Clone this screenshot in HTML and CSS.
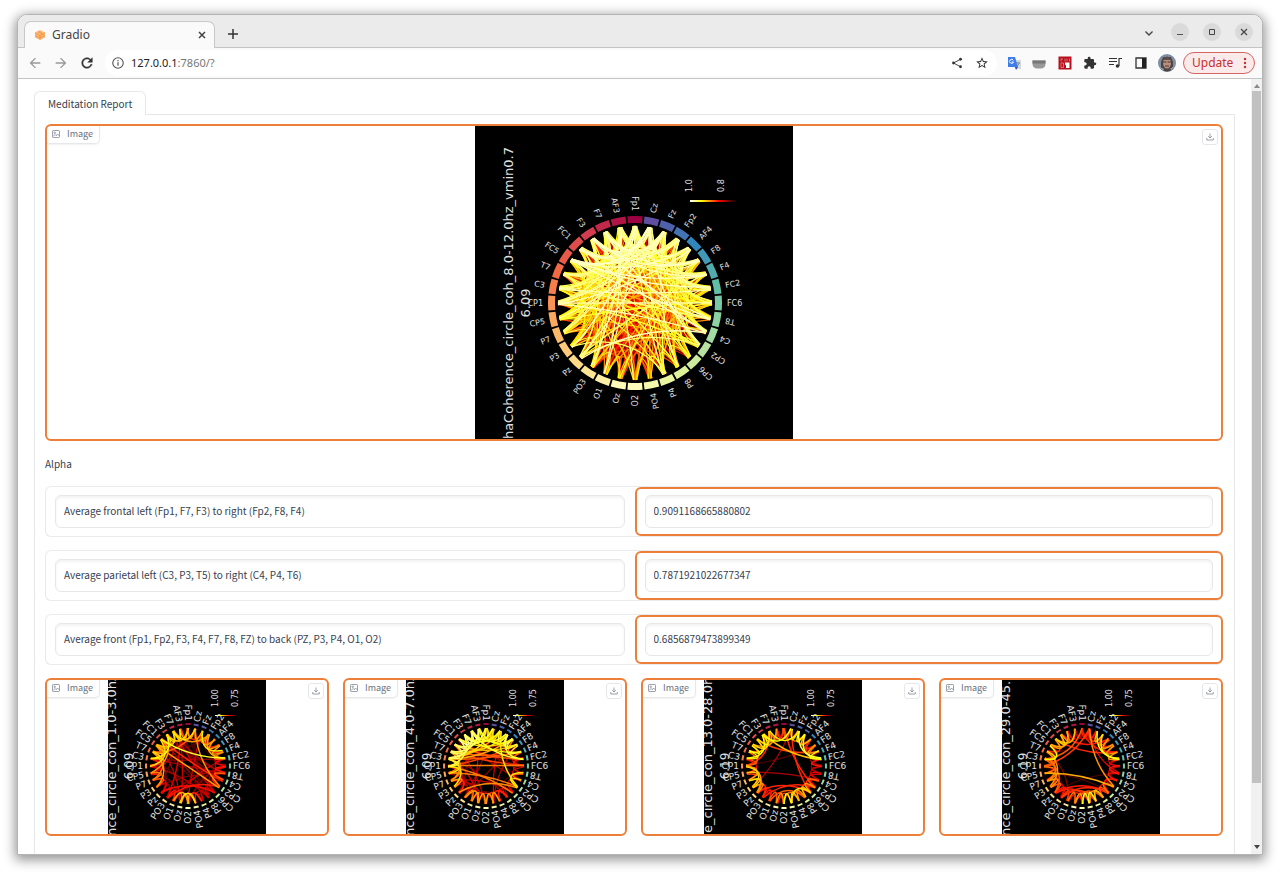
FILE: index.html
```html
<!DOCTYPE html>
<html lang="en">
<head>
<meta charset="utf-8">
<title>Gradio</title>
<link rel="stylesheet" href="styles.css">
</head>
<body>
<div class="window">
  <header class="tabstrip">
    <div class="browser-tab">
      <svg class="favicon" viewBox="0 0 24 24" aria-hidden="true"><path d="M12 2l10 5v10l-10 5-10-5V7z" fill="#fbb977"/><path d="M2 8l10 5 10-5M2 13l10 5 10-5M8 5l9 5M12 13v8" fill="none" stroke="#f08f3a" stroke-width="1.600"/></svg>
      <span class="browser-tab-title">Gradio</span>
      <button class="icon-btn tab-close" aria-label="Close tab"><svg viewBox="0 0 16 16"><path d="M5 5l6 6M11 5l-6 6" stroke="#444" stroke-width="1.500"/></svg></button>
    </div>
    <button class="icon-btn new-tab" aria-label="New tab"><svg viewBox="0 0 16 16"><path d="M8 3v10M3 8h10" stroke="#333" stroke-width="1.500"/></svg></button>
    <div class="window-controls">
      <button class="icon-btn tab-search" aria-label="Search tabs"><svg viewBox="0 0 16 16"><path d="M4.500 7.500L8 11l3.500-3.500" fill="none" stroke="#444" stroke-width="1.400"/></svg></button>
      <button class="icon-btn round" aria-label="Minimize"><svg viewBox="0 0 18 18"><path d="M6 11.500h6" stroke="#555" stroke-width="1"/></svg></button>
      <button class="icon-btn round" aria-label="Maximize"><svg viewBox="0 0 18 18"><path d="M6.500 6.500h5v5h-5z" fill="none" stroke="#444" stroke-width="1"/></svg></button>
      <button class="icon-btn round" aria-label="Close"><svg viewBox="0 0 18 18"><path d="M6 6l6 6M12 6l-6 6" stroke="#444" stroke-width="1.200"/></svg></button>
    </div>
  </header>

  <nav class="toolbar" aria-label="Browser">
    <div class="nav-buttons">
      <button class="icon-btn faded" aria-label="Back"><svg viewBox="0 0 24 24"><path d="M20 11H7.830l5.590-5.590L12 4l-8 8 8 8 1.410-1.410L7.830 13H20z"/></svg></button>
      <button class="icon-btn faded" aria-label="Forward"><svg viewBox="0 0 24 24"><path d="M4 13h12.170l-5.590 5.590L12 20l8-8-8-8-1.410 1.410L16.170 11H4z"/></svg></button>
      <button class="icon-btn" aria-label="Reload"><svg viewBox="0 0 24 24"><path d="M17.650 6.350C16.200 4.900 14.210 4 12 4c-4.420 0-7.990 3.580-7.990 8s3.570 8 7.990 8c3.730 0 6.840-2.550 7.730-6h-2.080c-.82 2.330-3.040 4-5.650 4-3.310 0-6-2.690-6-6s2.690-6 6-6c1.660 0 3.140.69 4.220 1.780L13 11h7V4z" stroke="#333" stroke-width=".6"/></svg></button>
    </div>
    <div class="omnibox">
      <svg class="info" viewBox="0 0 16 16" aria-hidden="true"><circle cx="8" cy="8" r="6" fill="none" stroke="#555" stroke-width="1.300"/><path d="M8 7.200v4M8 4.600v1.300" stroke="#555" stroke-width="1.400"/></svg>
      <span class="url"><span class="host">127.0.0.1</span>:7860/?</span>
      <button class="icon-btn share" aria-label="Share"><svg viewBox="0 0 24 24"><path d="M19 4.500L5 12l14 7.500" fill="none" stroke="#444" stroke-width="2"/><circle cx="19" cy="4.500" r="2.800"/><circle cx="5" cy="12" r="2.800"/><circle cx="19" cy="19.500" r="2.800"/></svg></button>
      <button class="icon-btn star" aria-label="Bookmark"><svg viewBox="0 0 24 24"><path d="M22 9.240l-7.190-.62L12 2 9.190 8.630 2 9.240l5.460 4.730L5.820 21 12 17.270 18.180 21l-1.630-7.030zM12 15.400l-3.760 2.270 1-4.280-3.320-2.880 4.380-.38L12 6.100l1.710 4.040 4.380.38-3.320 2.880 1 4.280z"/></svg></button>
    </div>
    <div class="extensions">
      <button class="icon-btn" aria-label="Translate"><svg viewBox="0 0 16 16"><path d="M7 5h8v9H9z" fill="#d5d8dc"/><path d="M10 8h4M12 7v1M10.500 12l3-4" stroke="#888" fill="none"/><path d="M2 2h7l3 10H2z" fill="#3f7de8"/><path d="M9 12h3l-2 3z" fill="#2856b8"/><path d="M7.300 5.300A2 2 0 1 0 7.500 7H5.700" fill="none" stroke="#fff"/></svg></button>
      <button class="icon-btn" aria-label="Pocket"><svg viewBox="0 0 16 16"><path d="M1.500 5.500h13v3q0 5-5 5h-3q-5 0-5-5z" fill="#999"/><path d="M1.500 5.500h13v3h-13z" fill="#777"/></svg></button>
      <button class="icon-btn" aria-label="Reader extension"><svg viewBox="0 0 16 16"><path d="M1.500 1.500h13v13h-13z" fill="#b8101c"/><path d="M4 3.500v3M4 4h2M8 3.500v3M10 3.500v3M12.500 3.500v3M4 8v4.500h2.500V8z" fill="none" stroke="#e08a8a" stroke-width=".8"/><path d="M8 7.500h4.500V13H9v-3H8z" fill="#fff"/></svg></button>
      <button class="icon-btn" aria-label="Extensions"><svg viewBox="-2 -2 28 28"><path d="M20.500 11H19V7c0-1.100-.9-2-2-2h-4V3.500a2.500 2.500 0 0 0-5 0V5H4c-1.100 0-2 .9-2 2v3.800h1.500a2.700 2.700 0 0 1 0 5.400H2V20c0 1.100.9 2 2 2h3.800v-1.500a2.700 2.700 0 0 1 5.400 0V22H17c1.100 0 2-.9 2-2v-4h1.500a2.500 2.500 0 0 0 0-5z"/></svg></button>
      <button class="icon-btn" aria-label="Media controls"><svg viewBox="0 0 16 16"><path d="M2 3.500h8M2 6.500h8M2 9.500h5M12 11V3.500h3" fill="none" stroke="#333" stroke-width="1.200"/><circle cx="10.500" cy="11" r="1.800"/></svg></button>
      <button class="icon-btn" aria-label="Side panel"><svg viewBox="0 0 16 16"><path d="M3 3h10v10H3z" fill="none" stroke="#333" stroke-width="1.300"/><path d="M9 3h4v10H9z" fill="#222"/></svg></button>
      <button class="icon-btn avatar" aria-label="Profile"><svg viewBox="0 0 18 18"><circle cx="9" cy="9" r="9" fill="#7f8da2"/><path d="M3 15V8l2-5h8l2 5v7q-6 5-12 0z" fill="#4c4542"/><ellipse cx="9" cy="9" rx="4" ry="5.500" fill="#b98f82"/><path d="M5 5q4-5 8 0v1H5z" fill="#5b4d48"/><path d="M5 8h3.500M9.500 8H13M7 12h4" stroke="#4a3836" stroke-width="1"/><path d="M2 13l4 2-1 2zM12 15l4-3-2 4z" fill="#9aa9b8"/></svg></button>
    </div>
    <button class="update">Update<svg viewBox="0 0 4 12" aria-hidden="true"><circle cx="2" cy="2" r="1.200"/><circle cx="2" cy="6" r="1.200"/><circle cx="2" cy="10" r="1.200"/></svg></button>
  </nav>

  <div class="viewport">
    <main class="app">
      <div class="tabs" role="tablist"><button class="tab" role="tab" aria-selected="true">Meditation Report</button></div>
      <section class="panel">
        <figure class="image-box" data-chart="alpha"></figure>
        <p class="heading">Alpha</p>
        <div class="rows">
          <div class="row">
            <div class="cell"><input aria-label="Frontal metric" value="Average frontal left (Fp1, F7, F3) to right (Fp2, F8, F4)"></div>
            <div class="cell active"><input aria-label="Frontal value" value="0.9091168665880802"></div>
          </div>
          <div class="row">
            <div class="cell"><input aria-label="Parietal metric" value="Average parietal left (C3, P3, T5) to right (C4, P4, T6)"></div>
            <div class="cell active"><input aria-label="Parietal value" value="0.7871921022677347"></div>
          </div>
          <div class="row">
            <div class="cell"><input aria-label="Front to back metric" value="Average front (Fp1, Fp2, F3, F4, F7, F8, FZ) to back (PZ, P3, P4, O1, O2)"></div>
            <div class="cell active"><input aria-label="Front to back value" value="0.6856879473899349"></div>
          </div>
        </div>
        <div class="gallery">
          <figure class="image-box" data-chart="delta"></figure>
          <figure class="image-box" data-chart="theta"></figure>
          <figure class="image-box" data-chart="beta"></figure>
          <figure class="image-box" data-chart="gamma"></figure>
        </div>
      </section>
    </main>
    <div class="scrollbar" aria-hidden="true">
      <svg viewBox="0 0 8 8"><path d="M1 6l3-4 3 4z" fill="#8a8a8a"/></svg>
      <div class="track"><div class="thumb"></div></div>
      <svg viewBox="0 0 8 8"><path d="M1 2l3 4 3-4z" fill="#444"/></svg>
    </div>
  </div>
</div>
<script src="charts.js"></script>
</body>
</html>
```
FILE: styles.css
```css
* { box-sizing: border-box; }

body {
  margin: 0;
  padding: 14px 17px 19px;
  height: 100vh;
  background: #fff;
  color: #374151;
  font: 10px/16px "Noto Sans CJK SC", "Noto Sans", sans-serif;
  overflow: hidden;
}

button, input { font: inherit; color: inherit; }

.window {
  height: 100%;
  display: flex;
  flex-direction: column;
  background: #fff;
  border: 1px solid #b5b5b5;
  border-radius: 10px 10px 0 0;
  overflow: hidden;
  box-shadow: 0 3px 12px 2px rgba(0, 0, 0, .42);
}

.icon-btn {
  display: grid;
  place-items: center;
  width: 16px;
  height: 16px;
  padding: 0;
  border: 0;
  background: none;
  fill: #333;
}
.icon-btn svg { display: block; width: 100%; height: 100%; }
.faded { fill: #999; }

/* Browser chrome */
.tabstrip {
  display: flex;
  align-items: flex-end;
  flex: none;
  height: 33px;
  padding-left: 6px;
  background: #ebebeb;
  border-bottom: 1px solid #c4c4c4;
}
.browser-tab {
  display: flex;
  align-items: center;
  width: 191px;
  height: 27px;
  margin-bottom: -1px;
  padding: 0 4px 0 9px;
  background: #fafafa;
  border: 1px solid #c8c8c8;
  border-bottom: 0;
  border-radius: 7px 7px 0 0;
}
.favicon { width: 12px; height: 12px; }
.browser-tab-title {
  flex: 1;
  margin-left: 6px;
  color: #444;
  font: 12px/16px "Noto Sans", sans-serif;
}
.new-tab { align-self: center; margin: 6px 0 0 10px; }
.window-controls {
  display: flex;
  align-items: center;
  align-self: center;
  gap: 14px;
  margin: 2px 9px 0 auto;
}
.round { width: 18px; height: 18px; border-radius: 50%; background: #dadada; }

.toolbar {
  display: flex;
  align-items: center;
  flex: none;
  height: 31px;
  padding: 0 7px 0 9px;
  background: #fafafa;
  border-bottom: 1px solid #c4c4c4;
}
.nav-buttons { display: flex; gap: 10px; }
.omnibox {
  display: flex;
  align-items: center;
  flex: 1;
  height: 26px;
  margin: 0 9px 0 10px;
  padding: 0 8px 0 6px;
  background: #fff;
  border-radius: 13px;
}
.info { width: 14px; height: 14px; }
.url {
  flex: 1;
  margin-left: 6px;
  color: #777;
  font: 11px/16px "Noto Sans", sans-serif;
}
.host { color: #222; }
.share { width: 12px; height: 12px; margin-right: 12px; }
.star { width: 14px; height: 14px; }
.extensions {
  display: flex;
  align-items: center;
  justify-content: space-between;
  width: 170px;
}
.avatar { width: 18px; height: 18px; }
.update {
  display: flex;
  align-items: center;
  justify-content: space-between;
  width: 72px;
  height: 22px;
  margin-left: 7px;
  padding: 0 7px 0 8px;
  border: 1px solid #d56464;
  border-radius: 11px;
  background: #fbeaea;
  color: #c5302f;
  font: 12px/16px "Noto Sans", sans-serif;
}
.update svg { width: 4px; height: 12px; fill: #c5302f; }

/* Page */
.viewport { display: flex; flex: 1; min-height: 0; }
.app { flex: 1; min-width: 0; padding: 12px 16px 0; overflow: hidden; }
.tabs { display: flex; }
.tab {
  position: relative;
  height: 24px;
  margin-bottom: -1px;
  padding: 0 13px;
  border: 1px solid #e5e7eb;
  border-bottom: 0;
  border-radius: 6px 6px 0 0;
  background: #fff;
}
.panel {
  min-height: 100%;
  padding: 9px 11px 11px 10px;
  border: 1px solid #e5e7eb;
}
.image-box {
  position: relative;
  display: flex;
  justify-content: center;
  margin: 0;
  border: 2px solid #ee7f38;
  border-radius: 6px;
  background: #fff;
  overflow: hidden;
}
.chart { display: block; flex: none; background: #000; }
.chart text { fill: #e0e0e0; font-family: "DejaVu Sans", sans-serif; }

.caption {
  position: absolute;
  top: 0;
  left: 0;
  display: flex;
  align-items: center;
  gap: 7px;
  height: 18px;
  padding: 0 6px 2px 5px;
  border: solid #e5e7eb;
  border-width: 0 1px 1px 0;
  border-radius: 0 0 5px 0;
  box-shadow: 0 1px 2px rgba(0, 0, 0, .06);
  color: #6b7280;
  font-size: 9px;
}
.caption svg { width: 8px; height: 8px; }
.download {
  position: absolute;
  top: 3px;
  right: 3px;
  width: 16px;
  height: 16px;
  padding: 3px;
  border: 1px solid #e5e7eb;
  border-radius: 3px;
  background: #fff;
}
.download svg { display: block; width: 8px; height: 8px; }

.heading { margin: 15px 0 14px; }
.rows { display: grid; gap: 13px; }
.row {
  display: grid;
  grid-template-columns: 1fr 1fr;
  border: 1px solid #e9ebee;
  border-right: 0;
  border-radius: 6px;
}
.cell { padding: 8px 10px 8px 9px; }
.cell.active {
  padding: 6px 8px;
  border: 2px solid #ee7f38;
  border-radius: 6px;
}
.cell input {
  display: block;
  width: 100%;
  height: 33px;
  padding: 0 8px 2px;
  border: 1px solid #e5e7eb;
  border-radius: 6px;
  background: #fff;
  box-shadow: inset 0 2px 3px rgba(0, 0, 0, .05);
}
.gallery {
  display: grid;
  grid-template-columns: repeat(4, 1fr);
  gap: 14px;
  margin-top: 13px;
}

.scrollbar {
  display: flex;
  flex-direction: column;
  align-items: center;
  width: 11px;
  padding: 3px 0;
  background: #f1f1f1;
}
.scrollbar svg { width: 8px; height: 8px; }
.track { flex: 1; align-self: stretch; padding: 1px 1px 0; }
.thumb { height: 92%; background: #c1c1c1; }
```
FILE: charts.js
```js
// Circular connectivity plots, drawn as SVG.
const NODES = ["Fp1","AF3","F7","F3","FC1","FC5","T7","C3","CP1","CP5","P7","P3","Pz","PO3","O1","Oz",
  "O2","PO4","P4","P8","CP6","CP2","C4","T8","FC6","FC2","F4","F8","AF4","Fp2","Fz","Cz"];
const SPECTRAL = ["9e0142","d53e4f","f46d43","fdae61","fee08b","ffffbf","e6f598","abdda4","66c2a5","3288bd","5e4fa2"];

const large = {
  w: 318, h: 313, cx: 160, cy: 177, outer: 87, inner: 80, tip: 77, span: 10, labelR: 92, line: 1.3,
  labelSize: 8, titleX: 38, scoreX: 55, scoreSize: 13, titleSize: 13,
  bar: { x: 215, y: 74, w: 47, h: 2 }, ticks: [["1.0", 217, 66], ["0.8", 249, 66]]
};
const small = {
  w: 158, h: 154, cx: 80, cy: 86, outer: 43, inner: 41, tip: 38, span: 7, labelR: 45, line: 1.5,
  labelSize: 9, titleX: 8, scoreX: 25, scoreSize: 12, titleSize: 13,
  bar: { x: 107, y: 35, w: 23, h: 1 }, ticks: [["1.00", 110, 27], ["0.75", 130, 27]]
};

const CHARTS = {
  alpha: { ...large, title: "haCoherence_circle_coh_8.0-12.0hz_vmin0.7", titleY: 21, anchor: "end", score: "6.09", seed: 5, dense: true },
  delta: { ...small, title: "nce_circle_con_1.0-3.0hz", titleY: 156, score: "6.09", seed: 11, weak: 42,
    near: [.6,.7,.7,.65,.6,.65,.7,.4,.35,.55,.5,.3,.3,.4,.5,.65,.6,.35,.3,.3,.3,.4,.5,.4,.35,.5,.6,.6,.6,.55,.6,.6],
    arcs: [[4,25,.78],[5,21,.6],[31,21,.58],[30,26,.72],[29,25,.62],[7,3,.74],[8,4,.7],[11,6,.6],[10,5,.55],[9,3,.6],
      [15,17,.7],[13,21,.4],[12,20,.38],[2,31,.7],[3,0,.68],[2,29,.6],[5,2,.65],[6,31,.5],[14,16,.6],[4,22,.42]] },
  theta: { ...small, title: "nce_circle_con_4.0-7.0hz", titleY: 156, score: "6.09", seed: 23, weak: 30,
    near: [.8,.85,.88,.9,.88,.85,.85,.8,.72,.5,.6,.3,.35,.55,.6,.6,.6,.6,.4,.35,.35,.7,.5,.35,.4,.5,.8,.8,.85,.8,.7,.65],
    arcs: [[2,25,.8],[3,26,.76],[7,2,.85],[8,3,.82],[6,1,.85],[5,0,.8],[4,31,.78],[3,30,.75],[1,28,.74],[0,27,.7],[8,24,.55],
      [9,21,.55],[12,21,.58],[7,28,.62],[29,25,.8],[30,21,.7],[11,7,.7],[10,6,.6],[8,20,.55],[5,27,.65],[6,29,.68],
      [13,15,.6],[4,28,.7],[2,29,.8],[7,31,.68],[21,23,.7],[7,26,.5],[6,26,.5],[5,25,.48],[8,27,.46],[6,24,.45],[7,30,.6]] },
  beta: { ...small, title: "e_circle_con_13.0-28.0hz", titleY: 153, score: "6.19", seed: 37, weak: 1,
    near: [.45,.5,.6,.75,.7,.75,.7,.5,.55,.65,.7,.6,.4,.4,.5,.6,.75,.65,.6,.65,.6,.5,.35,.3,.4,.75,.6,.4,.65,.75,.7,.5],
    arcs: [[3,31,.76],[7,3,.74],[6,2,.7],[2,30,.72],[30,25,.8],[29,25,.76],[3,25,.65],[5,1,.6],[4,26,.45],[0,21,.42],[31,20,.42],
      [11,8,.68],[12,8,.6],[12,20,.42],[13,21,.42],[11,31,.25],[9,22,.25],[14,19,.5],[17,20,.7],[8,2,.42]] },
  gamma: { ...small, title: "nce_circle_con_29.0-45.", titleY: 156, score: "6.19", seed: 53, weak: 6,
    near: [.3,.4,.6,.68,.6,.3,.7,.5,.55,.58,.6,.5,.4,.45,.55,.6,.76,.8,.65,.5,.55,.3,.4,.4,.35,.6,.6,.6,.5,.65,.4,.4],
    arcs: [[30,25,.76],[29,25,.72],[7,5,.74],[4,1,.66],[5,2,.62],[9,21,.62],[31,21,.58],[12,20,.4],[13,20,.42],[7,0,.5],[8,31,.45],
      [4,26,.42],[10,7,.55],[11,6,.58],[13,18,.45],[12,17,.42],[0,26,.4],[3,28,.4],[12,7,.5],[15,19,.5],[31,23,.35]] }
};

function randomFrom(seed) {
  let s = seed;
  return () => { s = (s * 1664525 + 1013904223) % 4294967296; return s / 4294967296; };
}
const clamp = v => Math.max(0, Math.min(1, v));
function hot(v) {
  const c = [v / .365, (v - .365) / .381, (v - .746) / .254].map(n => Math.round(clamp(n) * 255));
  return `rgb(${c})`;
}
function spectral(t) {
  const p = t * 10, k = Math.min(9, Math.floor(p)), f = p - k;
  const rgb = h => [0, 2, 4].map(o => parseInt(h.slice(o, o + 2), 16));
  const a = rgb(SPECTRAL[k]), b = rgb(SPECTRAL[k + 1]);
  return `rgb(${a.map((n, i) => Math.round(n + (b[i] - n) * f))})`;
}

function links(c, rnd) {
  const out = [];
  if (c.dense) {
    for (let a = 0; a < 32; a++) {
      for (let b = a + 1; b < 32; b++) {
        const gap = Math.min(b - a, 32 - b + a);
        const up = (Math.cos(a * Math.PI / 16) + Math.cos(b * Math.PI / 16)) / 2;
        let v, keep;
        if (gap === 1) { v = .74 + .1 * up + rnd() * .14; keep = 1; }
        else if (gap === 2) { v = .6 + .2 * up + rnd() * .16; keep = up < -.6 ? .2 : 1; }
        else if (gap < 10) { v = .54 + .24 * up + rnd() * .28; keep = up < -.5 ? .08 : up < 0 ? .6 : .95; }
        else { v = .3 + .3 * up + Math.pow(rnd(), 2) * .62; keep = up < -.4 ? .2 : .95; }
        if (rnd() < keep) out.push([a, b, Math.max(.2, Math.min(.94, v))]);
      }
    }
    out.push([5, 31, .95], [8, 22, .93], [12, 22, .92], [12, 21, .86], [31, 21, .93], [0, 12, .84], [7, 23, .86], [11, 18, .84]);
  } else {
    for (let i = 0; i < c.weak; i++) {
      const a = Math.floor(rnd() * 32), b = (a + 3 + Math.floor(rnd() * 26)) % 32;
      out.push([a, b, .08 + rnd() * .24]);
    }
    c.near.forEach((v, i) => {
      out.push([i, (i + 1) % 32, v]);
      out.push([i, (i + 2) % 32, v * .7]);
    });
    out.push(...c.arcs);
  }
  return out.sort((p, q) => p[2] - q[2]);
}

function draw(name) {
  const c = CHARTS[name], rnd = randomFrom(c.seed);
  const at = (r, deg) => {
    const t = deg * Math.PI / 180;
    return [c.cx + r * Math.cos(t), c.cy - r * Math.sin(t)].map(n => +n.toFixed(1));
  };
  // Control points lean from each end towards the centre and a little towards the far end.
  const lean = (p, q) => [0, 1].map(i => {
    const o = i ? c.cy : c.cx;
    return (o + (p[i] - o) * .48 + (q[i] - o) * .16).toFixed(1);
  });
  let s = "";
  for (const [a, b, v] of links(c, rnd)) {
    const j = () => (rnd() - .5) * 3;
    const p = at(c.tip, 90 + a * 11.25 + j()), q = at(c.tip, 90 + b * 11.25 + j());
    const w = v < .36 ? c.line * .8 : c.line;
    s += `<path d="M${p}C${lean(p, q)} ${lean(q, p)} ${q}" fill="none" stroke="${hot(v)}" stroke-width="${w}"/>`;
  }
  NODES.forEach((label, i) => {
    const d = 90 + i * 11.25, h = c.span / 2;
    s += `<path d="M${at(c.outer, d - h)}A${c.outer} ${c.outer} 0 0 0 ${at(c.outer, d + h)}L${at(c.inner, d + h)}A${c.inner} ${c.inner} 0 0 1 ${at(c.inner, d - h)}z" fill="${spectral(i / 31)}"/>`;
    const outward = i >= 24;
    s += `<text transform="translate(${at(c.labelR, d)}) rotate(${outward ? -d : 180 - d})" dy="3" text-anchor="${outward ? "start" : "end"}" font-size="${c.labelSize}">${label}</text>`;
  });
  s += `<text transform="translate(${c.titleX} ${c.titleY}) rotate(-90)" text-anchor="${c.anchor || "start"}" font-size="${c.titleSize}">${c.title}</text>`;
  s += `<text transform="translate(${c.scoreX} ${c.cy}) rotate(-90)" text-anchor="middle" font-size="${c.scoreSize}">${c.score}</text>`;
  for (const [t, x, y] of c.ticks) s += `<text transform="translate(${x} ${y}) rotate(-90)" font-size="8">${t}</text>`;
  s += `<linearGradient id="bar-${name}"><stop offset="0" stop-color="#fff"/><stop offset=".25" stop-color="#ff0"/><stop offset=".62" stop-color="#f00"/><stop offset="1"/></linearGradient>`;
  s += `<rect x="${c.bar.x}" y="${c.bar.y}" width="${c.bar.w}" height="${c.bar.h}" fill="url(#bar-${name})"/>`;
  return `<svg class="chart" width="${c.w}" height="${c.h}" viewBox="0 0 ${c.w} ${c.h}" role="img" aria-label="${name} coherence">${s}</svg>`;
}

document.querySelectorAll("[data-chart]").forEach(box => {
  box.innerHTML = draw(box.dataset.chart) +
    `<figcaption class="caption"><svg viewBox="0 0 16 16" fill="none" stroke="#7b828e" stroke-width="1.500"><rect x="1" y="1" width="14" height="14" rx="1.500"/><circle cx="5.500" cy="5.500" r="1.500"/><path d="M2 13l4-4 2.500 2.500L11 8l4 4"/></svg>Image</figcaption>` +
    `<button class="download" aria-label="Download"><svg viewBox="0 0 16 16" fill="none" stroke="#7b828e" stroke-width="1.500"><path d="M8 1v9M4.500 6.500L8 10l3.500-3.500M1.500 10v4h13v-4"/></svg></button>`;
});
```
